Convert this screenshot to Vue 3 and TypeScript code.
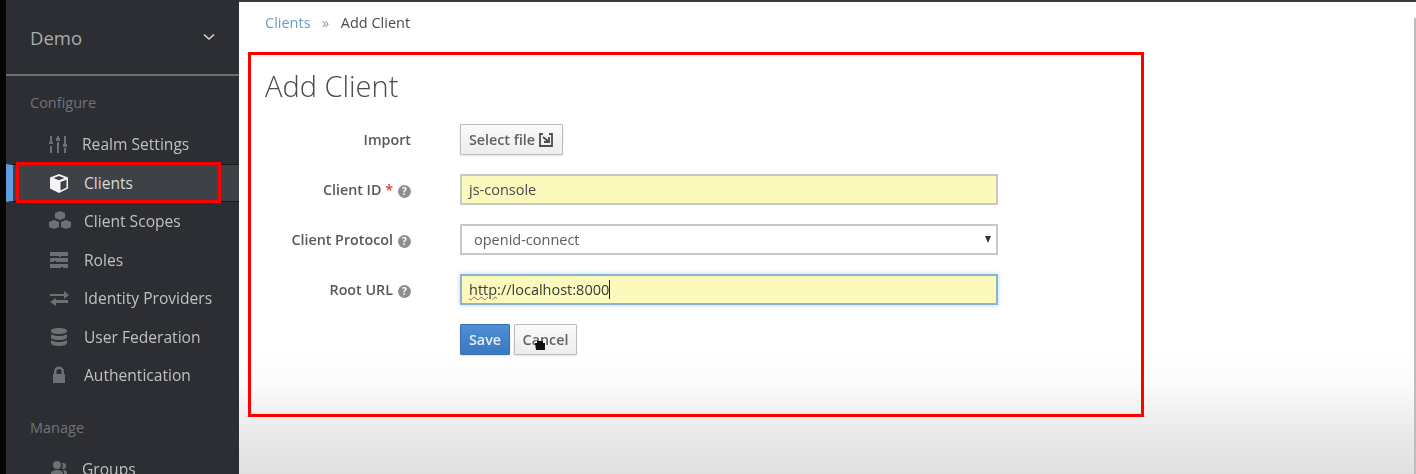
<template>
  <div class="page">
    <aside class="sidebar">
      <div class="realm">
        <span>Demo</span>
        <svg class="chevron" viewBox="0 0 12 8"><path d="M1 1.5l5 4.5 5-4.5" /></svg>
      </div>
      <div class="nav-title first">Configure</div>
      <ul class="nav">
        <li
          v-for="item in configureItems"
          :key="item.label"
          class="nav-item"
          :class="{ active: item.active, tight: item.tight }"
        >
          <svg class="nav-icon" viewBox="0 0 24 24"><path fill-rule="evenodd" :d="item.icon" /></svg>
          <span>{{ item.label }}</span>
          <div v-if="item.active" class="red-mark"></div>
        </li>
      </ul>
      <div class="nav-title">Manage</div>
      <ul class="nav">
        <li class="nav-item tight">
          <svg class="nav-icon" viewBox="0 0 24 24"><path fill-rule="evenodd" :d="groupsIcon" /></svg>
          <span>Groups</span>
        </li>
      </ul>
    </aside>

    <main class="content">
      <nav class="crumbs">
        <a>Clients</a>
        <span class="sep">»</span>
        <span>Add Client</span>
      </nav>

      <section class="panel">
        <h1>Add Client</h1>
        <form class="form" @submit.prevent>
          <label>Import</label>
          <div>
            <button class="btn file-btn" type="button">
              Select file
              <svg viewBox="0 0 16 16" width="16" height="16">
                <path d="M5 2H2v12h12V2h-3M5 5l6 5M11 5v5H6" />
              </svg>
            </button>
          </div>

          <label>Client ID <em>*</em><i class="help">?</i></label>
          <div class="field filled">js-console</div>

          <label>Client Protocol<i class="help">?</i></label>
          <div class="field select">
            <span>openid-connect</span>
            <span class="arrow"></span>
          </div>

          <label>Root URL<i class="help">?</i></label>
          <div class="field filled focus">
            <span class="typed"><span class="squiggle">http</span>://localhost:8000</span>
          </div>

          <div class="actions">
            <button class="btn primary" type="button">Save</button>
            <button class="btn cancel" type="button">
              Cancel
              <svg class="pointer" viewBox="0 0 12 10" width="12" height="10">
                <path d="M1 3h2V1h6v2h2v7H2z" />
              </svg>
            </button>
          </div>
        </form>
      </section>
    </main>
    <div class="scroll"></div>
  </div>
</template>

<script setup lang="ts">
interface NavItem {
  label: string;
  icon: string;
  active?: boolean;
  tight?: boolean;
}

const configureItems: NavItem[] = [
  {
    label: "Realm Settings",
    tight: true,
    icon: "M2 4h2v6H2zM1 10h4v2H1zM2 14h2v7H2zM9 4h2v2H9zM8 6h4v3H8zM9 10h2v11H9zM16 4h2v8h-2zM15 12h4v3h-4zM16 16h2v5h-2z",
  },
  {
    label: "Clients",
    active: true,
    icon: "M11 3l9 3.5v11L11 22l-9-4.500v-11zM5.500 7L11 9.200 16.500 7 11 4.900zM12.500 11v8.500l6-3V8.700z",
  },
  {
    label: "Client Scopes",
    icon: "M12 2l5 2v5l-5 2-5-2V4zM6 11l5 2v5l-5 2-5-2v-5zM18 11l5 2v5l-5 2-5-2v-5z",
  },
  {
    label: "Roles",
    icon: "M2 4h18v4h-7v1h-2V8H2zM2 10h18v4H8v-1H6v1H2zM2 16h18v4h-5v-1h-2v1H2z",
  },
  {
    label: "Identity Providers",
    icon: "M2 8h14V5l5 4-5 4v-3H2zM20 14H8v-2l-6 4 6 4v-3h12z",
  },
  {
    label: "User Federation",
    icon: "M11 3c5 0 8 1.200 8 3s-3 3-8 3-8-1.200-8-3 3-3 8-3zM3 9c2 1.500 5 2 8 2s6-.5 8-2v3c0 1.800-3 3-8 3s-8-1.200-8-3zM3 15c2 1.500 5 2 8 2s6-.5 8-2v3c0 1.800-3 3-8 3s-8-1.200-8-3z",
  },
  {
    label: "Authentication",
    icon: "M6 11V8.500a5 5 0 0 1 10 0V11h1v9H5v-9zM8.500 11h5V8.500a2.500 2.500 0 0 0-5 0z",
  },
];

const groupsIcon =
  "M9 4a3.500 3.500 0 0 1 0 8 3.500 3.500 0 0 1 0-8zM3 21v-4c0-3 3-4 6-4s6 1 6 4v4zM15 6a3 3 0 0 1 0 6h-1c1-2 1-4 0-6zM16 13c2 0 3 1.500 3 3.500V20h-3v-4c0-1-.5-2-1-3z";
</script>

<style>
html,
body {
  margin: 0;
  background: #000;
}
</style>

<style scoped>
.page {
  display: flex;
  width: 1416px;
  height: 474px;
  overflow: hidden;
  box-sizing: border-box;
  padding-left: 6px;
  background: #050505;
  font-family: "Open Sans", "Liberation Sans", sans-serif;
}
.sidebar {
  width: 233px;
  flex: none;
  background: #2c2e33;
  color: #bfc0c2;
  font-size: 15.600px;
}
.realm {
  display: flex;
  align-items: center;
  justify-content: space-between;
  box-sizing: border-box;
  height: 76px;
  padding: 0 24px 0 24px;
  border-bottom: 2px solid #6b6d70;
  font-size: 18.500px;
  color: #a9abad;
}
.chevron {
  width: 12px;
  height: 8px;
  fill: none;
  stroke: #d5d6d7;
  stroke-width: 1.600;
}
.nav-title {
  margin: 22px 0 0 24px;
  height: 22px;
  line-height: 22px;
  font-size: 14.500px;
  color: #717377;
}
.nav-title.first {
  margin-top: 16px;
}
.nav {
  list-style: none;
  margin: 11px 0 0;
  padding: 0;
}
.nav-item {
  position: relative;
  display: flex;
  align-items: center;
  box-sizing: border-box;
  height: 38.500px;
  padding-left: 42px;
  white-space: nowrap;
  filter: blur(0.35px);
}
.nav-icon {
  width: 24px;
  height: 24px;
  flex: none;
  margin-right: 12px;
  fill: #6d7074;
}
.nav-item.tight .nav-icon {
  margin-right: 10px;
}
.nav-item.active {
  background: #3e4145;
  border-top: 1px solid #191a1d;
  border-bottom: 1px solid #191a1d;
  border-left: 7px solid #5f9ee0;
  padding-left: 35px;
  color: #d8d9da;
  filter: none;
}
.nav-item.active .nav-icon {
  fill: #f4f4f4;
}
.red-mark {
  position: absolute;
  left: 3px;
  top: -3px;
  width: 205px;
  height: 41px;
  box-sizing: border-box;
  border: 3px solid #f00;
}
.content {
  flex: 1;
  box-sizing: border-box;
  border-top: 2px solid #3a3b3e;
  padding: 0 0 0 9px;
  color: #4a4b4d;
  background: linear-gradient(#fff 350px, #fafafa 385px, #efefef 414px, #dfdfdf 472px);
  font-size: 14.500px;
}
.crumbs {
  display: flex;
  align-items: center;
  gap: 11.500px;
  height: 41px;
  padding: 0 0 0 17px;
  margin-bottom: 9px;
  filter: blur(0.35px);
}
.crumbs a {
  color: #6a9cc8;
}
.sep {
  color: #9a9a9a;
}
.panel {
  box-sizing: border-box;
  width: 896px;
  height: 365px;
  border: 3px solid #f00;
  padding: 0 0 0 14px;
}
.panel h1 {
  margin: 0;
  padding-top: 9px;
  height: 50px;
  line-height: 44px;
  font-size: 29px;
  font-weight: 300;
  color: #4a4b4d;
  filter: blur(0.3px);
}
.form {
  display: grid;
  grid-template-columns: 146px 538px;
  column-gap: 49px;
  row-gap: 19px;
  align-items: center;
  margin-top: 10px;
  filter: blur(0.35px);
}
.form label {
  text-align: right;
  font-size: 14.300px;
  font-weight: 600;
  color: #58595b;
}
.form em {
  font-style: normal;
  color: #d9403a;
}
.help {
  display: inline-block;
  width: 13px;
  height: 13px;
  margin-left: 5px;
  border-radius: 50%;
  background: #8d8e90;
  color: #fff;
  font-size: 10px;
  font-style: normal;
  font-weight: 700;
  line-height: 13px;
  text-align: center;
  vertical-align: 0;
}
.btn {
  box-sizing: border-box;
  height: 31px;
  border: 1px solid #bbb;
  border-radius: 1px;
  background: linear-gradient(#fafafa, #ededed);
  box-shadow: 0 1px 2px rgba(0, 0, 0, 0.12);
  color: #606165;
  font: 600 14.300px "Open Sans", "Liberation Sans", sans-serif;
  padding: 0;
}
.file-btn {
  display: flex;
  align-items: center;
  justify-content: center;
  gap: 3px;
  width: 103px;
}
.file-btn svg {
  fill: none;
  stroke: #4d4e50;
  stroke-width: 1.800;
}
.field {
  box-sizing: border-box;
  display: flex;
  align-items: center;
  height: 31px;
  padding: 0 7px;
  border: 2px solid #c8c8c8;
  background: #fff;
  color: #48494b;
  font-size: 14.500px;
}
.field.filled {
  background: #fbfabc;
}
.field.focus {
  border-color: #8cb2d4;
  box-shadow: 0 0 4px rgba(102, 165, 225, 0.5);
}
.select {
  justify-content: space-between;
  padding: 0 5px 0 12px;
  color: #5c5d5f;
}
.arrow {
  width: 0;
  height: 0;
  border-left: 3.500px solid transparent;
  border-right: 3.500px solid transparent;
  border-top: 7px solid #333;
}
.typed {
  border-right: 1px solid #222;
  color: #3a3b3d;
}
.squiggle {
  text-decoration: underline wavy #d8453c 1px;
}
.actions {
  grid-column: 2;
  display: flex;
  gap: 4px;
}
.primary {
  width: 50px;
  border-color: #3a70ad;
  background: linear-gradient(#4f8fd6, #3a78c0);
  color: #e8eef6;
}
.cancel {
  position: relative;
  width: 63px;
}
.pointer {
  position: absolute;
  left: 19px;
  top: 15px;
  fill: #111;
}
.scroll {
  position: absolute;
  right: 0;
  top: 18px;
  width: 2px;
  height: 456px;
  background: #bdbdbd;
}
</style>
